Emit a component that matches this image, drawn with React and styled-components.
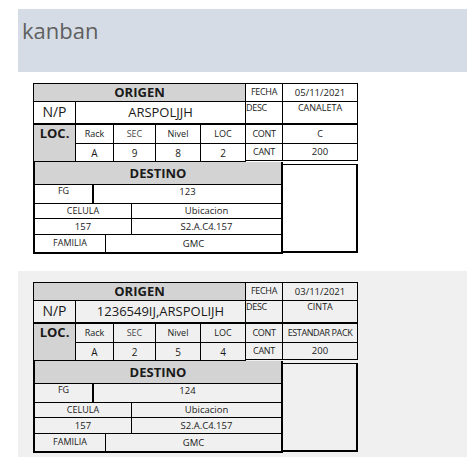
import styled, { createGlobalStyle } from 'styled-components';

const records = [
  {
    fecha: '05/11/2021',
    np: 'ARSPOLJJH',
    desc: 'CANALETA',
    cont: 'C',
    cant: '200',
    rack: 'A',
    sec: '9',
    nivel: '8',
    loc: '2',
    fg: '123',
    celula: '157',
    ubicacion: 'S2.A.C4.157',
    familia: 'GMC',
  },
  {
    fecha: '03/11/2021',
    np: '1236549IJ,ARSPOLIJH',
    desc: 'CINTA',
    cont: 'ESTANDAR PACK',
    cant: '200',
    rack: 'A',
    sec: '2',
    nivel: '5',
    loc: '4',
    fg: '124',
    celula: '157',
    ubicacion: 'S2.A.C4.157',
    familia: 'GMC',
  },
];

const GlobalStyle = createGlobalStyle`
  * { box-sizing: border-box; }
  body {
    margin: 0;
    background: #fff;
    font-family: 'Open Sans', 'Noto Sans', sans-serif;
    color: #1a1a1a;
  }
`;

export default function App() {
  return (
    <>
      <GlobalStyle />
      <Page>
        <Header>
          <Title>kanban</Title>
        </Header>
        {records.map((r, i) => (
          <Section key={i} $alt={i % 2 === 1}>
            <Card>
              <TopRow>
                <OrigenGrid>
                  <Cell $col="1 / 6" $gray $bold $size={13}>ORIGEN</Cell>
                  <Cell $thickBottom $size={14}>N/P</Cell>
                  <Cell $col="2 / 6" $thickBottom $size={13}>{r.np}</Cell>
                  <Cell $row="3 / 5" $gray $bold $size={13} $top>LOC.</Cell>
                  <Cell $size={9}>Rack</Cell>
                  <Cell $size={9} $muted>SEC</Cell>
                  <Cell $size={9}>Nivel</Cell>
                  <Cell $size={9}>LOC</Cell>
                  <Cell $size={10}>{r.rack}</Cell>
                  <Cell $size={10}>{r.sec}</Cell>
                  <Cell $size={10}>{r.nivel}</Cell>
                  <Cell $size={10}>{r.loc}</Cell>
                </OrigenGrid>
                <InfoGrid>
                  <Label>FECHA</Label>
                  <Cell $size={9.5}>{r.fecha}</Cell>
                  <Label $left $top $thickBottom>DESC</Label>
                  <Cell $size={9} $top $thickBottom>{r.desc}</Cell>
                  <Label>CONT</Label>
                  <Cell $size={9} $tight>{r.cont}</Cell>
                  <Label>CANT</Label>
                  <Cell $size={9.5}>{r.cant}</Cell>
                </InfoGrid>
              </TopRow>
              <BottomRow>
                <DestinoBlock>
                  <DestinoHeader>DESTINO</DestinoHeader>
                  <SplitRow $cols="59px 1fr" $h={19}>
                    <Cell $top $thickRight $size={9}>FG</Cell>
                    <Cell $top $thickRight $size={9.5}>{r.fg}</Cell>
                  </SplitRow>
                  <SplitRow $cols="97px 1fr" $h={15}>
                    <Cell $size={9}>CELULA</Cell>
                    <Cell $thickRight $size={9.5}>Ubicacion</Cell>
                  </SplitRow>
                  <SplitRow $cols="97px 1fr" $h={16}>
                    <Cell $size={9.5}>{r.celula}</Cell>
                    <Cell $thickRight $size={9.5}>{r.ubicacion}</Cell>
                  </SplitRow>
                  <SplitRow $cols="71px 1fr" $h={19}>
                    <Cell $thickBottom $size={9}>FAMILIA</Cell>
                    <Cell $thickBottom $thickRight $size={9.5}>{r.familia}</Cell>
                  </SplitRow>
                </DestinoBlock>
                <EmptyBox />
              </BottomRow>
            </Card>
          </Section>
        ))}
      </Page>
    </>
  );
}

const Page = styled.div`
  padding: 9px 0 0 18px;
  width: 467px;
  height: 457px;
  overflow: hidden;
`;

const Header = styled.div`
  height: 63px;
  background: #d6dce5;
  padding: 6px 0 0 4px;
`;

const Title = styled.div`
  font-family: 'Open Sans', 'Noto Sans', sans-serif;
  font-size: 22px;
  color: #5f5f5f;
  line-height: 30px;
`;

const Section = styled.div`
  height: 199px;
  padding: 11px 0 0 15px;
  background: ${props => props.$alt ? '#f0f0f0' : '#ffffff'};
`;

const Card = styled.div`
  display: flex;
  flex-direction: column;
  width: 325px;
`;

const TopRow = styled.div`
  display: flex;
  align-items: flex-start;
`;

const OrigenGrid = styled.div`
  display: grid;
  grid-template-columns: 42px 38px 42px 45px 45px;
  grid-template-rows: 18px 23px 19px 18px;
  border-left: 1px solid #000;
  border-top: 1px solid #000;
`;

const InfoGrid = styled.div`
  display: grid;
  grid-template-columns: 37px 75px;
  grid-template-rows: 18px 23px 19px 17px;
  border-top: 1px solid #000;
`;

const Cell = styled.div`
  grid-column: ${props => props.$col || 'auto'};
  grid-row: ${props => props.$row || 'auto'};
  display: flex;
  align-items: ${props => props.$top ? 'flex-start' : 'center'};
  justify-content: ${props => props.$left ? 'flex-start' : 'center'};
  padding-top: ${props => props.$top ? '1px' : '0'};
  background: ${props => props.$gray ? '#d3d3d3' : 'transparent'};
  border-right: ${props => props.$thickRight ? 2 : 1}px solid #000;
  border-bottom: ${props => props.$thickBottom ? 2 : 1}px solid #000;
  font-size: ${props => props.$size || 9}px;
  font-weight: ${props => props.$bold ? 700 : 400};
  color: ${props => props.$muted ? '#4a4a4a' : '#1a1a1a'};
  letter-spacing: ${props => props.$tight ? '-0.4px' : '0'};
  line-height: 1.2;
  white-space: nowrap;
  overflow: hidden;
`;

const Label = styled(Cell)`
  font-size: 9px;
  letter-spacing: -0.3px;
`;

const BottomRow = styled.div`
  display: flex;
  align-items: flex-start;
`;

const DestinoBlock = styled.div`
  width: 250px;
  display: flex;
  flex-direction: column;
  border-left: 2px solid #000;
`;

const DestinoHeader = styled.div`
  height: 23px;
  display: flex;
  align-items: center;
  justify-content: center;
  background: #d3d3d3;
  border-right: 2px solid #000;
  border-bottom: 1px solid #000;
  font-size: 13px;
  font-weight: 700;
`;

const SplitRow = styled.div`
  display: grid;
  grid-template-columns: ${props => props.$cols};
  height: ${props => props.$h}px;
`;

const EmptyBox = styled.div`
  width: 75px;
  height: 89px;
  margin-top: 2px;
  border-top: 1px solid #000;
  border-right: 2px solid #000;
  border-bottom: 2px solid #000;
`;
